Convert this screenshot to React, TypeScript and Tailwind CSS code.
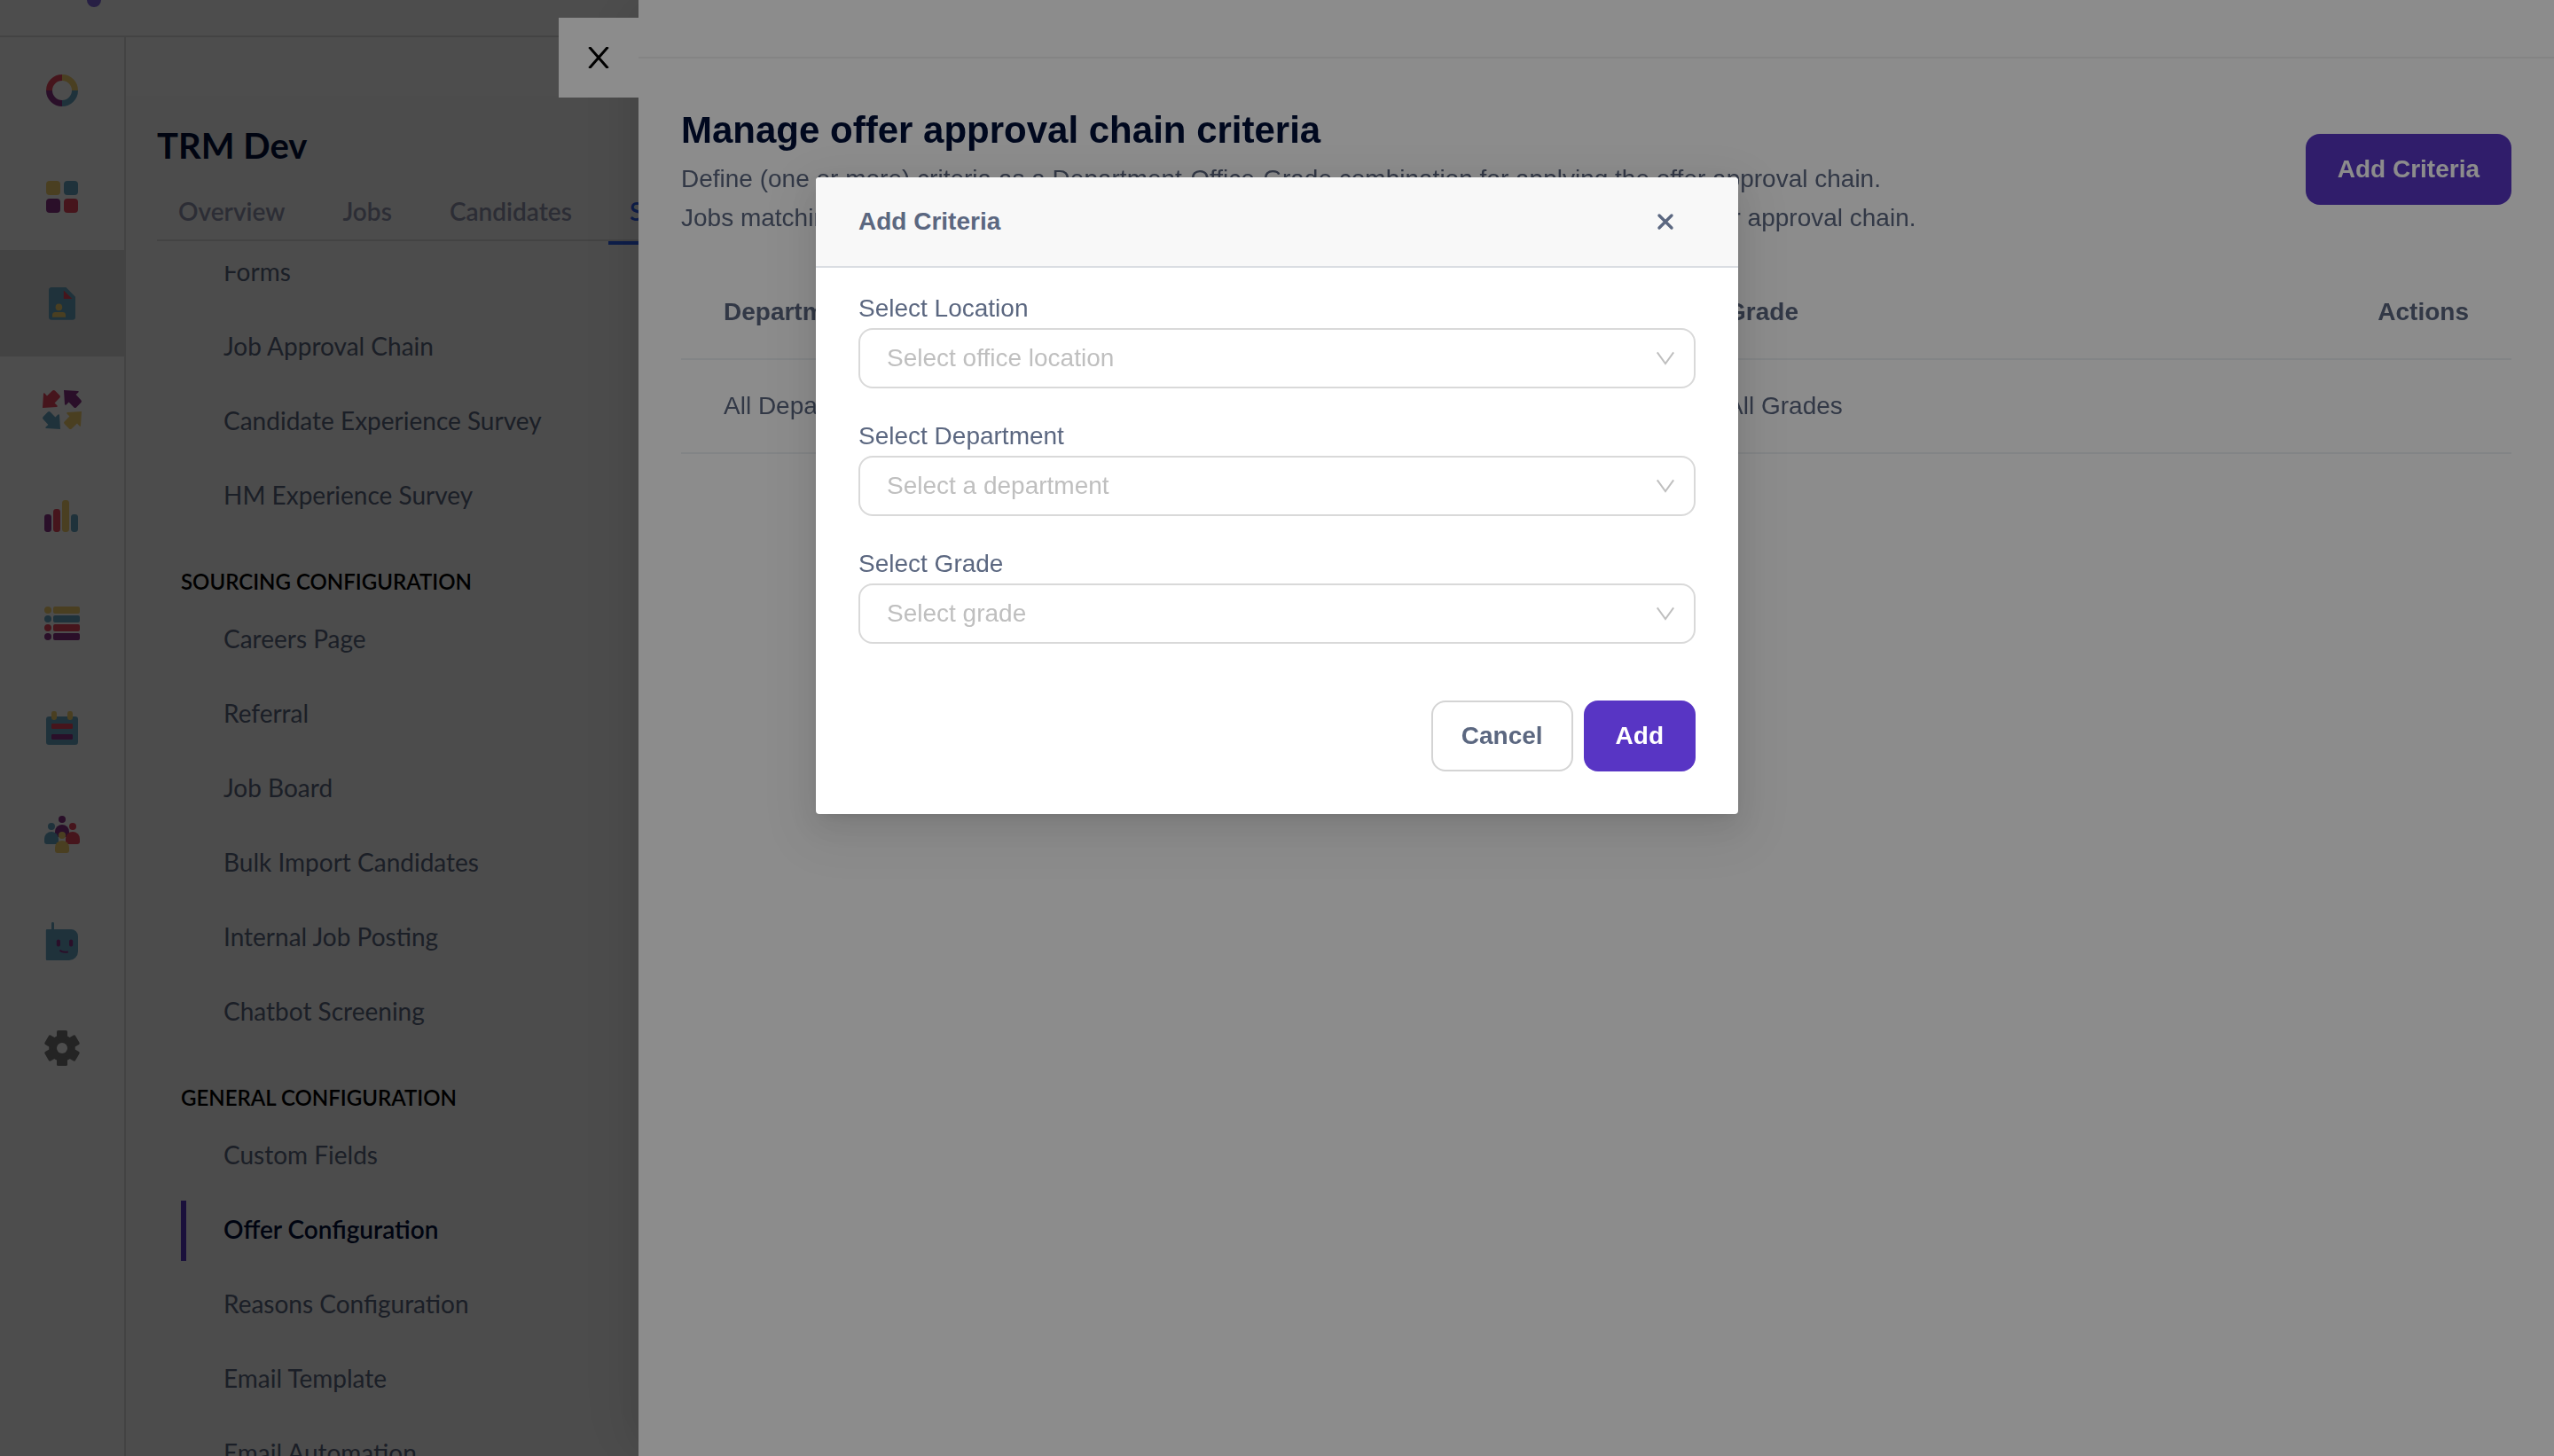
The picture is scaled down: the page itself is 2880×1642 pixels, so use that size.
import React from 'react';

const colors = { yellow: '#f4d06f', teal: '#66a6c4', red: '#e8485c', purple: '#8a3389' };

const arrow =
  'M1 11 L1.5 2.9 Q1.7 2.4 2.2 2.8 L3.5 4.2 L6.6 1.3 Q7.3 .7 8 1.3 L10.7 4 Q11.3 4.7 10.7 5.3 L7.8 8.2 L9.3 9.7 Q9.6 10.4 9 10.5Z';

const sideNav = [
  {
    name: 'Home',
    icon: (
      <g fill="none" strokeWidth="3.5">
        <path d="M12 4.75A7.25 7.25 0 0 1 19.25 12" stroke={colors.yellow} />
        <path d="M19.25 12A7.25 7.25 0 0 1 12 19.25" stroke={colors.teal} />
        <path d="M12 19.25A7.25 7.25 0 0 1 4.75 12" stroke={colors.purple} />
        <path d="M4.75 12A7.25 7.25 0 0 1 12 4.75" stroke={colors.red} />
      </g>
    ),
  },
  {
    name: 'Dashboard',
    icon: (
      <>
        <rect x="3" y="3" width="8" height="8" rx="2" fill={colors.yellow} />
        <rect x="13" y="3" width="8" height="8" rx="2" fill={colors.teal} />
        <rect x="3" y="13" width="8" height="8" rx="2" fill={colors.purple} />
        <rect x="13" y="13" width="8" height="8" rx="2" fill={colors.red} />
      </>
    ),
  },
  {
    name: 'Jobs',
    active: true,
    icon: (
      <>
        <path d="M6 3h8.2l5.3 5.4v11.4a1.6 1.6 0 0 1-1.6 1.6H6.1a1.6 1.6 0 0 1-1.6-1.6V4.6A1.6 1.6 0 0 1 6 3Z" fill={colors.teal} />
        <path d="M12.9 4.8L17.7 9.5H12.9Z" fill={colors.red} />
        <circle cx="10.2" cy="14.2" r="1.9" fill={colors.yellow} />
        <path d="M6.5 19.9v-1.2a1.7 1.7 0 0 1 1.7-1.7h4.1a1.7 1.7 0 0 1 1.7 1.7v1.2Z" fill={colors.yellow} />
      </>
    ),
  },
  {
    name: 'Pipeline',
    icon: (
      <>
        <path d={arrow} fill={colors.red} />
        <path d={arrow} fill={colors.purple} transform="translate(12 0) rotate(90 6 6)" />
        <path d={arrow} fill={colors.yellow} transform="translate(12 12) rotate(180 6 6)" />
        <path d={arrow} fill={colors.teal} transform="translate(0 12) rotate(-90 6 6)" />
      </>
    ),
  },
  {
    name: 'Reports',
    icon: (
      <>
        <rect x="2" y="11" width="4" height="10" rx="1.7" fill={colors.purple} />
        <rect x="7" y="8" width="4" height="13" rx="1.7" fill={colors.red} />
        <rect x="12" y="3" width="4" height="18" rx="1.7" fill={colors.yellow} />
        <rect x="17" y="11" width="4" height="10" rx="1.7" fill={colors.teal} />
      </>
    ),
  },
  {
    name: 'Lists',
    icon: (
      <>
        {[colors.yellow, colors.teal, colors.red, colors.purple].map((color, index) => (
          <g key={color} fill={color}>
            <circle cx="4" cy={5 + index * 5} r="2" />
            <rect x="7" y={3 + index * 5} width="15" height="4" rx="1" />
          </g>
        ))}
      </>
    ),
  },
  {
    name: 'Calendar',
    icon: (
      <>
        <rect x="3" y="5" width="18" height="16" rx="1.6" fill={colors.teal} />
        <rect x="6" y="2" width="3" height="5" rx="1.2" fill={colors.yellow} />
        <rect x="15" y="2" width="3" height="5" rx="1.2" fill={colors.yellow} />
        <rect x="6" y="9" width="12" height="3" rx=".6" fill={colors.red} />
        <rect x="6" y="15" width="12" height="3" rx=".6" fill={colors.purple} />
      </>
    ),
  },
  {
    name: 'People',
    icon: (
      <>
        <circle cx="12" cy="3" r="2" fill={colors.purple} />
        <path d="M8 13v-3a4 4 0 0 1 8 0v3Z" fill={colors.purple} />
        <circle cx="6" cy="7" r="2" fill={colors.teal} />
        <path d="M2 15.8V14a4 4 0 0 1 8 0v3H3.2A1.2 1.2 0 0 1 2 15.8Z" fill={colors.teal} />
        <circle cx="18" cy="7" r="2" fill={colors.red} />
        <path d="M14 17v-3a4 4 0 0 1 8 0v1.8a1.2 1.2 0 0 1-1.2 1.2Z" fill={colors.red} />
        <circle cx="12" cy="12" r="2" fill={colors.yellow} />
        <path d="M8 20.8V19a4 4 0 0 1 8 0v1.8a1.2 1.2 0 0 1-1.2 1.2H9.2A1.2 1.2 0 0 1 8 20.8Z" fill={colors.yellow} />
      </>
    ),
  },
  {
    name: 'Chatbot',
    icon: (
      <>
        <rect x="6" y="1" width="1.5" height="5" rx=".7" fill={colors.teal} />
        <path d="M3.5 5H17a4 4 0 0 1 4 4v8.5a5 5 0 0 1-5 5H3.5a.6.6 0 0 1-.6-.6V5.6a.6.6 0 0 1 .6-.6Z" fill={colors.teal} />
        <rect x="8.9" y="10.7" width="2.1" height="4" rx="1" fill={colors.purple} />
        <rect x="16" y="10.7" width="2.1" height="4" rx="1" fill={colors.purple} />
        <path d="M10.8 16.7q.9 1.5 4.6 1" fill="none" stroke={colors.purple} strokeWidth="1" />
      </>
    ),
  },
  {
    name: 'Settings',
    icon: (
      <g fill="#777777">
        <circle cx="12" cy="12" r="7.4" />
        <rect x="9" y="2" width="6" height="20" rx=".8" />
        <rect x="9" y="2" width="6" height="20" rx=".8" transform="rotate(60 12 12)" />
        <rect x="9" y="2" width="6" height="20" rx=".8" transform="rotate(120 12 12)" />
        <circle cx="12" cy="12" r="3" fill="#ffffff" />
      </g>
    ),
  },
];

const tabs = ['Overview', 'Jobs', 'Candidates', 'Settings'];

const settingsGroups = [
  { title: '', items: ['Forms', 'Job Approval Chain', 'Candidate Experience Survey', 'HM Experience Survey'] },
  {
    title: 'SOURCING CONFIGURATION',
    items: ['Careers Page', 'Referral', 'Job Board', 'Bulk Import Candidates', 'Internal Job Posting', 'Chatbot Screening'],
  },
  {
    title: 'GENERAL CONFIGURATION',
    items: ['Custom Fields', 'Offer Configuration', 'Reasons Configuration', 'Email Template', 'Email Automation'],
  },
];

const fields = [
  { id: 'location', label: 'Select Location', placeholder: 'Select office location' },
  { id: 'department', label: 'Select Department', placeholder: 'Select a department' },
  { id: 'grade', label: 'Select Grade', placeholder: 'Select grade' },
];

const Sidebar = () => (
  <nav className="w-[142px] shrink-0 border-r-2 border-[#dedede]">
    {sideNav.map((item) => (
      <a
        key={item.name}
        href="#"
        aria-label={item.name}
        className={`flex h-[120px] items-center justify-center ${item.active ? 'bg-[#dedede]' : ''}`}
      >
        <svg viewBox="0 0 24 24" className="size-12">
          {item.icon}
        </svg>
      </a>
    ))}
  </nav>
);

const SettingsPage = () => (
  <main className="flex min-w-0 flex-1 flex-col pt-[66px]">
    <div className="flex min-h-0 flex-1 flex-col bg-[#fbfbfb] pt-7 pl-[35px]">
      <h1 className="text-[40px] leading-[56px] font-bold text-[#001038]">TRM Dev</h1>
      <div className="mt-4 flex gap-[17px] border-b-2 border-[#dedede]">
        {tabs.map((tab) => (
          <a
            key={tab}
            href="#"
            className={`-mb-1.5 flex h-[68px] items-center border-b-4 px-6 pb-1 text-[28px] font-semibold ${
              tab === 'Settings' ? 'border-[#2f63f5] text-[#2f63f5]' : 'border-transparent text-[#9296b0]'
            }`}
          >
            {tab}
          </a>
        ))}
      </div>
      <div className="mt-7 min-h-0 flex-1 overflow-hidden pl-[27px]">
        {/* list is scrolled slightly, first item is cut by the panel edge */}
        <div className="-mt-[26px]">
          {settingsGroups.map((group) => (
            <section key={group.title}>
              {group.title && (
                <h3 className="pt-11 pb-[14px] text-2xl leading-9 font-semibold text-black">{group.title}</h3>
              )}
              <ul className="flex flex-col gap-4">
                {group.items.map((item) => (
                  <li key={item}>
                    <a
                      href="#"
                      className={`flex h-[68px] items-center border-l-6 pb-1 pl-[42px] text-[28px] ${
                        item === 'Offer Configuration'
                          ? 'border-[#5835c4] font-semibold text-[#001038]'
                          : 'border-transparent text-[#5b6780]'
                      }`}
                    >
                      {item}
                    </a>
                  </li>
                ))}
              </ul>
            </section>
          ))}
        </div>
      </div>
    </div>
  </main>
);

const CriteriaDrawer = () => (
  <div className="fixed inset-0 flex items-start justify-end bg-black/45 font-['Liberation_Sans',Arial,sans-serif]">
    <button type="button" aria-label="Close drawer" className="z-10 mt-5 flex size-[90px] items-center justify-center bg-white text-black">
      <svg viewBox="0 0 24 24" className="size-6" fill="none" stroke="currentColor" strokeWidth="3">
        <path d="M1.5 0L22.5 24M22.5 0L1.5 24" />
      </svg>
    </button>
    <div className="h-full w-3/4 bg-white text-[28px] leading-11 text-[#5b6780] shadow-[-12px_0_32px_-16px_rgba(0,0,0,0.08),-18px_0_56px_rgba(0,0,0,0.05),-24px_0_96px_32px_rgba(0,0,0,0.03)]">
      <div className="h-[66px] border-b-2 border-[#f0f0f0]"></div>
      <div className="p-12">
        <div className="flex items-center justify-between">
          <div>
            <h2 className="text-[42px] leading-[66px] font-bold text-[#001038]">Manage offer approval chain criteria</h2>
            <p>Define (one or more) criteria as a Department-Office-Grade combination for applying the offer approval chain.</p>
            <p>Jobs matching any one of the defined criteria combinations will automatically use the above offer approval chain.</p>
          </div>
          <button type="button" className="h-20 rounded-2xl bg-[#5835c4] px-9 font-bold text-white">
            Add Criteria
          </button>
        </div>
        <table className="mt-8 w-full table-fixed border-separate border-spacing-0 text-left">
          <thead>
            <tr>
              <th className="h-[106px] w-[27.4%] border-b-2 border-[#edf1f4] px-12">Department</th>
              <th className="w-[27.4%] border-b-2 border-[#edf1f4] px-12">Office</th>
              <th className="border-b-2 border-[#edf1f4] px-12">Grade</th>
              <th className="border-b-2 border-[#edf1f4] px-12 text-right">Actions</th>
            </tr>
          </thead>
          <tbody>
            <tr>
              <td className="h-[106px] border-b-2 border-[#edf1f4] px-12">All Departments</td>
              <td className="border-b-2 border-[#edf1f4] px-12">All Offices</td>
              <td className="border-b-2 border-[#edf1f4] px-12">All Grades</td>
              <td className="border-b-2 border-[#edf1f4] px-12"></td>
            </tr>
          </tbody>
        </table>
      </div>
    </div>
  </div>
);

const AddCriteriaModal = () => (
  <div className="fixed inset-0 z-20 flex items-start justify-center bg-black/45 pt-[200px] font-['Liberation_Sans',Arial,sans-serif]">
    <div
      role="dialog"
      aria-label="Add Criteria"
      className="w-[1040px] overflow-hidden rounded-sm bg-white text-[28px] leading-11 text-[#5b6780] shadow-[0_6px_12px_-8px_rgba(0,0,0,0.12),0_12px_32px_rgba(0,0,0,0.08),0_18px_56px_16px_rgba(0,0,0,0.05)]"
    >
      <div className="flex items-center justify-between border-b-2 border-[#dadde2] bg-[#f8f8f8] px-12 py-7">
        <h2 className="font-bold">Add Criteria</h2>
        <button type="button" aria-label="Close" className="px-6">
          <svg viewBox="0 0 20 20" className="size-5" fill="none" stroke="currentColor" strokeWidth="3.4" strokeLinecap="round">
            <path d="M3 3L17 17M17 3L3 17" />
          </svg>
        </button>
      </div>
      <form className="px-12 pt-6 pb-12">
        <div className="flex flex-col gap-8">
          {fields.map((field) => (
            <div key={field.id}>
              <label htmlFor={field.id} className="block">
                {field.label}
              </label>
              <div className="relative">
                <select
                  id={field.id}
                  className="block h-[68px] w-full appearance-none rounded-2xl border-2 border-[#d9d9d9] bg-white px-[30px] text-[#bfbfbf]"
                >
                  <option>{field.placeholder}</option>
                </select>
                <svg
                  viewBox="0 0 24 24"
                  className="pointer-events-none absolute top-[22px] right-[22px] size-6"
                  fill="none"
                  stroke="#bfbfbf"
                  strokeWidth="2"
                >
                  <path d="M2.8 5.4L12 18L21.2 5.4" />
                </svg>
              </div>
            </div>
          ))}
        </div>
        <div className="mt-16 flex justify-end gap-3">
          <button type="button" className="h-20 rounded-2xl border-2 border-[#d4d4d4] bg-white px-8 font-bold">
            Cancel
          </button>
          <button type="button" className="h-20 rounded-2xl bg-[#5835c4] px-9 font-bold text-white">
            Add
          </button>
        </div>
      </form>
    </div>
  </div>
);

const App = () => {
  return (
    <div className="flex h-screen flex-col overflow-hidden bg-white font-['Lato',sans-serif]">
      <header className="flex h-[42px] shrink-0 items-start border-b-2 border-[#dedede] pl-[98px]">
        <svg viewBox="0 0 16 8" className="h-2 w-4">
          <circle cx="8" cy="0" r="8" fill="#8066e0" />
        </svg>
      </header>
      <div className="flex min-h-0 flex-1">
        <Sidebar />
        <SettingsPage />
      </div>
      <CriteriaDrawer />
      <AddCriteriaModal />
    </div>
  );
};

export default App;
